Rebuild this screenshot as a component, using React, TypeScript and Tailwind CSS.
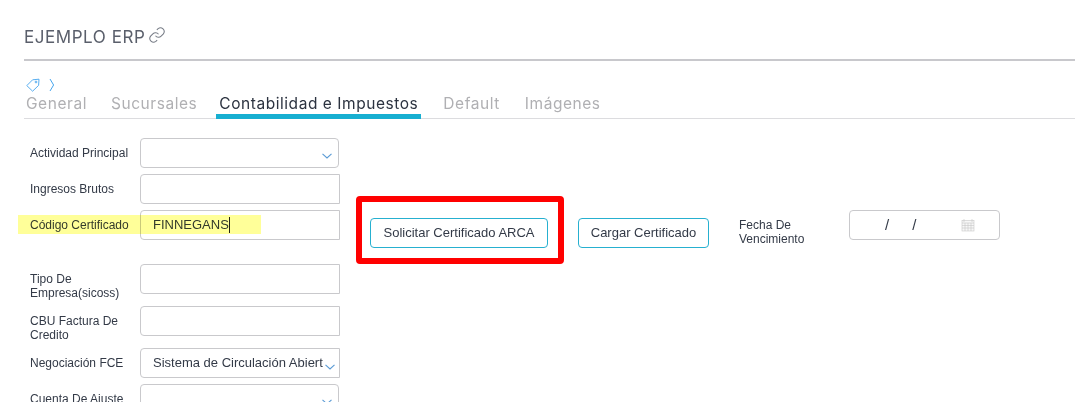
import React from "react";

const labelCls = "w-[110px] shrink-0 text-[12px] leading-[14px] text-[#333a47]";
const inputCls = "h-[30px] border border-[#c9c9cc] rounded-l-[4px] bg-white";

function Chevron({ className = "" }: { className?: string }) {
  return (
    <svg width="10" height="6" viewBox="0 0 10 6" fill="none" className={className}>
      <path d="M0.5 0.8 L5 5 L9.5 0.8" stroke="#5b9bd5" strokeWidth="1.1" />
    </svg>
  );
}

function Row({ label, top, low, children }: { label: string; top: string; low?: boolean; children?: React.ReactNode }) {
  return (
    <div className={`flex items-center pl-[6px] h-[30px] ${top}`}>
      <div className={low ? `${labelCls} mt-[14px]` : labelCls}>{label}</div>
      {children}
    </div>
  );
}

function SelectBox({ children }: { children?: React.ReactNode }) {
  return (
    <div className="relative flex items-center w-[199px] h-[30px] border border-[#c9c9cc] rounded-[4px] bg-white">
      {children}
      <Chevron className="absolute right-[6px] top-[14px]" />
    </div>
  );
}

function Input({ children }: { children?: React.ReactNode }) {
  return <div className={`${inputCls} w-[200px] flex items-center`}>{children}</div>;
}

const tabs = ["General", "Sucursales", "Contabilidad e Impuestos", "Default", "Imágenes"];

export default function App() {
  return (
    <div className="h-[402px] w-[1075px] overflow-hidden bg-white font-['Liberation_Sans',sans-serif] relative">
      <div className="pl-6">
        <div className="h-[61px] border-b-2 border-[#c8c8cc] pt-[27px] flex items-start">
          <span className="text-[17px] leading-[21px] text-[#5a5f6b] font-['Inter',sans-serif] tracking-[0.55px] whitespace-nowrap">EJEMPLO ERP</span>
          <svg width="18" height="18" viewBox="0 0 24 24" fill="none" stroke="#777c86" strokeWidth="1.4" className="ml-[3px] -mt-[1px]">
            <path d="M10 13a5 5 0 0 0 7.5.5l3-3a5 5 0 0 0-7-7l-1.7 1.7" />
            <path d="M14 11a5 5 0 0 0-7.5-.5l-3 3a5 5 0 0 0 7 7l1.7-1.7" />
          </svg>
        </div>

        <div className="flex items-center h-[17px] mt-[15px] pl-[2px] gap-[9px]">
          <svg width="14" height="14" viewBox="0 0 14 14" fill="none" stroke="#45a5ee" strokeWidth="0.9">
            <path d="M0.8 7.6 L6.6 1.8 L13 1.2 L12.6 7.4 L6.6 13.2 Z" />
            <circle cx="10" cy="4" r="0.9" />
          </svg>
          <svg width="6" height="14" viewBox="0 0 6 14" fill="none" stroke="#45a5ee" strokeWidth="1">
            <path d="M1 1 L4.6 7 L1 13" />
          </svg>
        </div>

        <div className="flex h-[27px] border-b border-[#dcdcdf] font-['Inter',sans-serif] text-[15.5px] leading-[20px] tracking-[0.55px] -mt-[1px] pt-[2px]">
          {tabs.map((t, i) => (
            <div
              key={t}
              className={
                i === 2
                  ? "h-[25px] px-[3px] ml-[19px] border-b-[5px] border-[#17afd1] text-[#2c3340] whitespace-nowrap"
                  : i === 0
                    ? "pl-[2px] text-[#b0b0b3] whitespace-nowrap"
                    : i === 1
                      ? "ml-[24px] text-[#b0b0b3] whitespace-nowrap"
                      : i === 3
                        ? "ml-[22px] text-[#b0b0b3] whitespace-nowrap"
                        : "ml-[25px] text-[#b0b0b3] whitespace-nowrap"
              }
            >
              {t}
            </div>
          ))}
        </div>

        <div className="flex flex-col">
          <Row label="Actividad Principal" top="mt-[19px]">
            <SelectBox />
          </Row>
          <Row label="Ingresos Brutos" top="mt-[6px]">
            <Input />
          </Row>
          <div className="flex h-[36px]">
            <Row label="Código Certificado" top="mt-[6px]">
              <Input>
                <span className="pl-3 text-[13px] text-[#333a47] border-r border-[#222] leading-[16px]">FINNEGANS</span>
              </Input>
            </Row>
            <div className="flex items-start">
              <button className="ml-[30px] mt-[14px] h-[30px] w-[178px] rounded-[4px] border border-[#26b0d0] bg-white text-[13px] text-[#333a47]">
                Solicitar Certificado ARCA
              </button>
              <button className="ml-[30px] mt-[14px] h-[30px] w-[131px] rounded-[4px] border border-[#26b0d0] bg-white text-[13px] text-[#333a47]">
                Cargar Certificado
              </button>
              <div className="ml-[30px] mt-[14px] w-[110px] text-[12px] leading-[14px] text-[#333a47]">Fecha De Vencimiento</div>
              <div className="mt-[6px] flex h-[30px] w-[151px] items-center rounded-[4px] border border-[#c9c9cc] bg-white text-[15px] text-[#333a47]">
                <span className="ml-[35px]">/</span>
                <span className="ml-[23px]">/</span>
                <svg width="14" height="14" viewBox="0 0 14 14" fill="none" stroke="#c8c8c8" strokeWidth="0.6" className="ml-[45px]">
                  <rect x="1" y="2.5" width="12" height="10.5" fill="#f7f7f7" />
                  <path d="M1 5h12M3 4V1M11 4V1M1 7.5h12M1 10h12M4 5v8M7 5v8M10 5v8" />
                </svg>
              </div>
            </div>
          </div>
          <Row label="Tipo De Empresa(sicoss)" top="mt-[24px]" low>
            <Input />
          </Row>
          <Row label="CBU Factura De Credito" top="mt-[12px]" low>
            <Input />
          </Row>
          <Row label="Negociación FCE" top="mt-[12px]">
            <div className="relative flex items-center w-[200px] h-[30px] border border-[#c9c9cc] rounded-l-[4px] bg-white">
              <span className="ml-3 text-[13px] text-[#333a47] whitespace-nowrap w-[171px] overflow-hidden">Sistema de Circulación Abiert</span>
              <Chevron className="absolute right-[4px] top-[15px]" />
            </div>
          </Row>
          <Row label="Cuenta De Ajuste" top="mt-[6px]">
            <SelectBox />
          </Row>
        </div>
      </div>

      <div className="pointer-events-none absolute left-[18px] top-[215px] h-[19px] w-[243px] bg-[#ffff99] mix-blend-multiply" />
      <div className="pointer-events-none absolute left-[356px] top-[196px] h-[68px] w-[208px] rounded-[4px] border-[6px] border-[#ff0000]" />
    </div>
  );
}
